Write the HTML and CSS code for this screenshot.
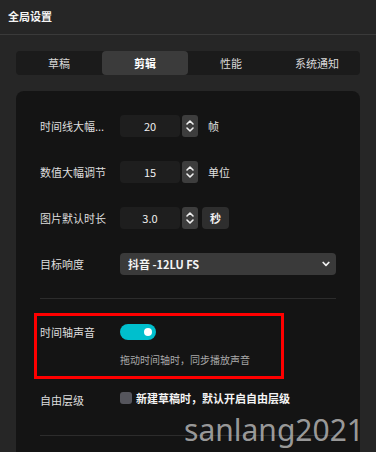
FILE: index.html
```html
<!DOCTYPE html>
<html lang="zh">
<head>
<meta charset="utf-8">
<link rel="stylesheet" href="styles.css">
</head>
<body>
<div class="app">
  <div class="header"><span class="title">全局设置</span></div>
  <div class="tabs">
    <div class="tab">草稿</div>
    <div class="tab active">剪辑</div>
    <div class="tab">性能</div>
    <div class="tab">系统通知</div>
  </div>
  <div class="panel">
    <div class="row">
      <div class="label">时间线大幅...</div>
      <div class="num">20</div>
      <div class="stepper"><svg width="10" height="16" viewBox="0 0 10 16"><path d="M2 6 L5 3 L8 6 M2 10 L5 13 L8 10" fill="none" stroke="#f0f0f0" stroke-width="1.6" stroke-linecap="round" stroke-linejoin="round"/></svg></div>
      <div class="unit">帧</div>
    </div>
    <div class="row">
      <div class="label">数值大幅调节</div>
      <div class="num">15</div>
      <div class="stepper"><svg width="10" height="16" viewBox="0 0 10 16"><path d="M2 6 L5 3 L8 6 M2 10 L5 13 L8 10" fill="none" stroke="#f0f0f0" stroke-width="1.6" stroke-linecap="round" stroke-linejoin="round"/></svg></div>
      <div class="unit">单位</div>
    </div>
    <div class="row">
      <div class="label">图片默认时长</div>
      <div class="num">3.0</div>
      <div class="stepper"><svg width="10" height="16" viewBox="0 0 10 16"><path d="M2 6 L5 3 L8 6 M2 10 L5 13 L8 10" fill="none" stroke="#f0f0f0" stroke-width="1.6" stroke-linecap="round" stroke-linejoin="round"/></svg></div>
      <div class="unit-btn">秒</div>
    </div>
    <div class="row">
      <div class="label">目标响度</div>
      <div class="select"><span>抖音 -12LU FS</span><svg width="8" height="6" viewBox="0 0 8 6"><path d="M1.2 1.5 L4 4.3 L6.8 1.5" fill="none" stroke="#f0f0f0" stroke-width="1.7" stroke-linecap="round" stroke-linejoin="round"/></svg></div>
    </div>
    <div class="divider"></div>
    <div class="highlight">
      <div class="trow">
        <div class="label">时间轴声音</div>
        <div class="toggle"><span class="knob"></span></div>
      </div>
      <div class="desc">拖动时间轴时，同步播放声音</div>
    </div>
    <div class="crow">
      <div class="label low">自由层级</div>
      <div class="check"></div>
      <div class="ctext">新建草稿时，默认开启自由层级</div>
    </div>
    <div class="divider second"></div>
  </div>
  <div class="watermark">sanlang2021</div>
</div>
</body>
</html>
```

FILE: styles.css
```css
html, body {
  margin: 0;
  padding: 0;
  background: #262626;
}
body {
  width: 376px;
  height: 452px;
  overflow: hidden;
  font-family: "Noto Sans CJK SC", "Noto Sans", sans-serif;
  color: #e2e2e2;
}
.app {
  position: relative;
  height: 452px;
  display: flex;
  flex-direction: column;
}
.header {
  height: 34px;
  border-bottom: 1px solid #3a3a3a;
  display: flex;
  align-items: center;
  padding-left: 8px;
}
.title {
  font-size: 11px;
  font-weight: bold;
  color: #f4f4f4;
  margin-top: -2px;
}
.tabs {
  margin: 16px 16px 0;
  height: 24px;
  background: #1b1b1b;
  border-radius: 4px;
  display: grid;
  grid-template-columns: repeat(4, 1fr);
}
.tab {
  display: flex;
  align-items: center;
  justify-content: center;
  font-size: 11px;
  color: #d8d8d8;
  border-radius: 4px;
}
.tab.active {
  background: #3b3b3b;
  color: #fff;
  font-weight: bold;
}
.panel {
  flex: 1;
  margin: 16px 16px 0;
  background: #141414;
  border-radius: 8px 8px 0 0;
  padding: 24px 24px 0;
  display: flex;
  flex-direction: column;
}
.row {
  display: flex;
  align-items: center;
  height: 22px;
  margin-bottom: 24px;
}
.row:nth-child(4) { margin-bottom: 23px; }
.label {
  width: 80px;
  flex-shrink: 0;
  font-size: 11px;
  color: #dedede;
}
.num {
  width: 60px;
  height: 22px;
  background: #1e1e1e;
  border-radius: 4px;
  display: flex;
  align-items: center;
  justify-content: center;
  font-size: 11px;
  color: #f0f0f0;
}
.stepper {
  width: 16px;
  height: 22px;
  margin-left: 2px;
  background: #3d3d3d;
  border-radius: 3px;
  display: flex;
  align-items: center;
  justify-content: center;
}
.unit {
  margin-left: 10px;
  font-size: 11px;
  color: #e0e0e0;
}
.unit-btn {
  margin-left: 4px;
  width: 27px;
  height: 22px;
  background: #2e2e2e;
  border-radius: 4px;
  display: flex;
  align-items: center;
  justify-content: center;
  font-size: 11px;
  font-weight: bold;
  color: #f0f0f0;
}
.select {
  width: 216px;
  height: 22px;
  background: #3a3a3a;
  border-radius: 4px;
  display: flex;
  align-items: center;
  justify-content: space-between;
  padding: 0 6px 0 8px;
  box-sizing: border-box;
  font-size: 11px;
  font-weight: bold;
  color: #f4f4f4;
}
.divider {
  height: 1px;
  background: #2c2c2c;
  width: 296px;
  flex-shrink: 0;
}
.highlight {
  margin: 14px 0 0 -6px;
  width: 250px;
  box-sizing: border-box;
  border: 3px solid #ff0000;
  padding: 8px 0 9px 3px;
}
.trow {
  display: flex;
  align-items: center;
  height: 16px;
}
.toggle {
  width: 36px;
  height: 16px;
  border-radius: 8px;
  background: #00bfcd;
  position: relative;
}
.knob {
  position: absolute;
  right: 4px;
  top: 4px;
  width: 8px;
  height: 8px;
  border-radius: 50%;
  background: #fff;
}
.desc {
  margin: 13px 0 0 80px;
  font-size: 10px;
  line-height: 14px;
  color: #a9a9a9;
}
.crow {
  display: flex;
  align-items: center;
  margin-top: 11px;
  height: 16px;
}
.label.low {
  position: relative;
  top: 2px;
}
.check {
  width: 12px;
  height: 12px;
  border-radius: 3px;
  background: #55555c;
  flex-shrink: 0;
}
.ctext {
  margin-left: 4px;
  font-size: 11px;
  font-weight: bold;
  color: #f4f4f4;
}
.divider.second {
  margin-top: 29px;
}
.watermark {
  position: absolute;
  right: 12px;
  bottom: 4px;
  font-family: "Noto Sans", sans-serif;
  font-size: 30px;
  line-height: 36px;
  color: rgba(190, 190, 190, 0.8);
}
```
